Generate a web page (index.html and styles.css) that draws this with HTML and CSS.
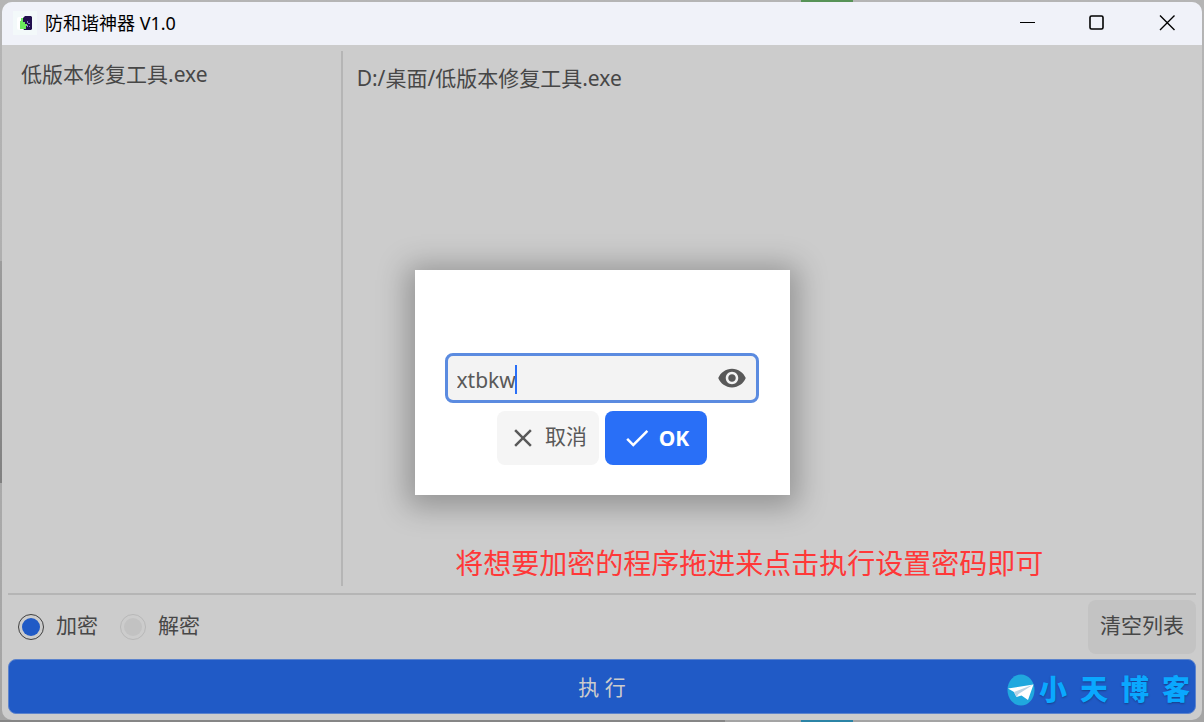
FILE: index.html
```html
<!DOCTYPE html>
<html lang="zh-CN">
<head>
    <meta charset="UTF-8">
    <title>防和谐神器 V1.0</title>
    <link rel="stylesheet" href="styles.css">
</head>
<body>
    <div class="window">
        <header class="titlebar">
            <svg class="app-icon" viewBox="0 0 24 24">
                <rect width="24" height="24" fill="#f3f9fa"/>
                <rect x="4" y="6" width="14" height="13" rx="2" fill="#ffffff"/>
                <path d="M12 5h6l1 1v12l-1 1h-7l-1-2V7z" fill="#22104e"/>
                <path d="M10 7H8v3H7v8h6v-3h1v-2h-2v-2h-2z" fill="#6bea5c"/>
                <path d="M10 7h1v4h-1zM12 6h1v2h-1z" fill="#22104e"/>
                <path d="M14 10h1v2h-1zM15 12h2v1h-2zM14 14h1v2h-1zM16 15h1v1h-1z" fill="#8a74cf"/>
            </svg>
            <span class="title">防和谐神器 V1.0</span>
            <div class="window-controls">
                <button class="control" aria-label="最小化">
                    <svg viewBox="0 0 16 16"><path d="M1 7.500h15"/></svg>
                </button>
                <button class="control" aria-label="最大化">
                    <svg viewBox="0 0 16 16"><rect x="1" y="1" width="13" height="13" rx="1.500" stroke-width="1.600"/></svg>
                </button>
                <button class="control" aria-label="关闭">
                    <svg viewBox="0 0 16 16"><path d="M1 .5L15.500 15M15.500 .5L1 15" stroke-width="1.400"/></svg>
                </button>
            </div>
        </header>

        <main class="app">
            <div class="panes">
                <ul class="file-list">
                    <li>低版本修复工具.exe</li>
                </ul>
                <div class="file-path">
                    <p>D:/桌面/低版本修复工具.exe</p>
                    <p class="hint">将想要加密的程序拖进来点击执行设置密码即可</p>
                </div>
            </div>

            <div class="toolbar">
                <label class="mode"><input type="radio" name="mode" checked><span class="label">加密</span></label>
                <label class="mode"><input type="radio" name="mode"><span class="label">解密</span></label>
                <button class="clear-button"><span class="label">清空列表</span></button>
            </div>

            <button class="run-button">执 行</button>

            <div class="watermark">
                <svg viewBox="0 0 28 32">
                    <ellipse cx="14" cy="16" rx="13.500" ry="15.500" fill="#20a8de"/>
                    <path d="M1 14.500L26.500 10.500 21 26 14.500 21.500 9.500 23 7 18z" fill="#ffffff"/>
                    <path d="M7 18L26.500 10.500 11.500 20 9.500 23z" fill="#b9d3e4"/>
                </svg>
                <span>小</span><span>天</span><span>博</span><span>客</span>
            </div>

            <form class="dialog">
                <div class="password">
                    <input type="text" class="password-box" value="xtbkw" aria-label="密码">
                    <span class="caret"></span>
                    <button type="button" class="reveal" aria-label="显示密码">
                        <svg viewBox="0 0 24 24"><path d="M12 4.500C7 4.500 2.730 7.610 1 12c1.730 4.390 6 7.500 11 7.500s9.270-3.110 11-7.500c-1.730-4.390-6-7.500-11-7.500zM12 17c-2.760 0-5-2.240-5-5s2.240-5 5-5 5 2.240 5 5-2.240 5-5 5zm0-8c-1.660 0-3 1.340-3 3s1.340 3 3 3 3-1.340 3-3-1.340-3-3-3z"/></svg>
                    </button>
                </div>
                <div class="dialog-buttons">
                    <button type="button" class="dialog-button">
                        <svg viewBox="0 0 24 24"><path d="M19 6.410L17.590 5 12 10.590 6.410 5 5 6.410 10.590 12 5 17.590 6.410 19 12 13.410 17.590 19 19 17.590 13.410 12z"/></svg>
                        <span class="label">取消</span>
                    </button>
                    <button type="button" class="dialog-button ok">
                        <svg viewBox="0 0 24 24"><path d="M9 16.170L4.830 12l-1.420 1.410L9 19 21 7l-1.410-1.410z"/></svg>
                        OK
                    </button>
                </div>
            </form>
        </main>
    </div>
</body>
</html>
```

FILE: styles.css
```css
* {
    box-sizing: border-box;
}

body {
    margin: 0;
    padding: 2px;
    height: 100vh;
    overflow: hidden;
    font-family: "Noto Sans", "Noto Sans CJK SC", sans-serif;
    font-size: 21px;
    line-height: 28px;
    color: #474747;
    /* strips of the desktop that show round the window */
    background:
        linear-gradient(#579357, #579357) 801px 0 / 52px 2px no-repeat,
        linear-gradient(#2b84a6, #2b84a6) 801px 100% / 52px 2px no-repeat,
        linear-gradient(#868686, #868686) 0 100% / 725px 2px no-repeat,
        linear-gradient(#9c9c9c, #808080) 0 261px / 2px 222px no-repeat,
        linear-gradient(#b5b5b5, #a4a4a4);
}

button {
    padding: 0;
    border: none;
    font: inherit;
    color: inherit;
    background: none;
}

.window {
    display: flex;
    flex-direction: column;
    height: 100%;
    border-radius: 10px;
    overflow: hidden;
    background: #cccccc;
}

.titlebar {
    display: flex;
    align-items: center;
    height: 43px;
    padding: 0 0 2px 11px;
    background: #f0f2f9;
    color: #000000;
}

.app-icon {
    width: 24px;
    height: 24px;
    margin-right: 8px;
}

.title {
    font-size: 18px;
}

.window-controls {
    display: flex;
    margin-left: auto;
}

.control {
    width: 70px;
    height: 41px;
}

.control svg {
    display: block;
    width: 16px;
    height: 16px;
    margin: 0 auto;
    fill: none;
    stroke: #000000;
}

.app {
    position: relative;
    flex: 1;
    display: flex;
    flex-direction: column;
    gap: 5px;
    padding: 6px;
}

.panes {
    flex: 1;
    display: flex;
    margin-bottom: 2px;
}

.file-list {
    width: 28%;
    margin: 0;
    padding: 9px 13px;
    list-style: none;
}

.file-path {
    flex: 1;
    display: flex;
    flex-direction: column;
    justify-content: space-between;
    border-left: 2px solid #b5b5b5;
    padding: 13px 14px;
}

.file-path p {
    margin: 0;
}

.file-path .hint {
    align-self: center;
    padding-right: 40px;
    font-size: 28px;
    line-height: 20px;
    color: #ff3838;
}

.toolbar {
    display: flex;
    align-items: center;
    gap: 22px;
    border-top: 2px solid #b5b5b5;
    padding: 5px 0 0 10px;
}

.label {
    padding-bottom: 5px;
}

.mode {
    display: flex;
    align-items: center;
    gap: 12px;
}

.mode input {
    appearance: none;
    width: 26px;
    height: 26px;
    margin: 0;
    padding: 3px;
    border: 1px solid #b8b8b8;
    border-radius: 50%;
    background: #c2c2c2 content-box;
}

.mode input:checked {
    border-color: #404040;
    background-color: #205ac6;
}

.clear-button {
    display: flex;
    align-items: center;
    justify-content: center;
    width: 108px;
    height: 54px;
    margin-left: auto;
    border-radius: 8px;
    background: #c3c3c3;
}

.run-button {
    height: 55px;
    border: 1px solid #5c83cc;
    border-radius: 8px;
    background: #205ac6;
    color: #cccccc;
}

.watermark {
    position: absolute;
    right: 12px;
    bottom: 13px;
    display: flex;
    align-items: center;
    gap: 13px;
    font-family: "Noto Sans CJK SC", sans-serif;
    font-size: 28px;
    font-weight: 900;
    line-height: 32px;
    color: #0aa8ff;
    text-shadow: 0 1px 2px rgba(0, 0, 0, 0.3);
}

.watermark span {
    padding-bottom: 3px;
}

.watermark svg {
    width: 28px;
    height: 32px;
    margin-right: -9px;
}

.dialog {
    position: absolute;
    inset: 0;
    width: 375px;
    height: fit-content;
    margin: auto;
    padding: 83px 31px 30px 30px;
    background: #ffffff;
    box-shadow: 0 4px 28px 8px rgba(0, 0, 0, 0.28);
}

.password {
    position: relative;
    display: flex;
    align-items: center;
    height: 50px;
    border: 3px solid #5b8be0;
    border-radius: 8px;
    background: #f3f3f3;
}

.password-box {
    flex: 1;
    min-width: 0;
    padding: 4px 9px 0;
    border: none;
    outline: none;
    background: none;
    font: inherit;
    color: #595959;
}

.caret {
    position: absolute;
    left: 67px;
    top: 9px;
    width: 2px;
    height: 29px;
    background: #296ff7;
}

.reveal {
    width: 30px;
    height: 30px;
    margin-right: 9px;
}

.reveal svg {
    display: block;
    width: 30px;
    height: 30px;
    fill: #595959;
}

.dialog-buttons {
    display: flex;
    justify-content: center;
    gap: 6px;
    margin-top: 8px;
}

.dialog-button {
    display: flex;
    align-items: center;
    justify-content: center;
    gap: 7px;
    width: 102px;
    height: 54px;
    border-radius: 8px;
    background: #f5f5f5;
    color: #595959;
}

.dialog-button svg {
    width: 30px;
    height: 30px;
    fill: currentColor;
}

.dialog-button.ok {
    background: #296ff7;
    color: #ffffff;
    font-weight: bold;
}
```
